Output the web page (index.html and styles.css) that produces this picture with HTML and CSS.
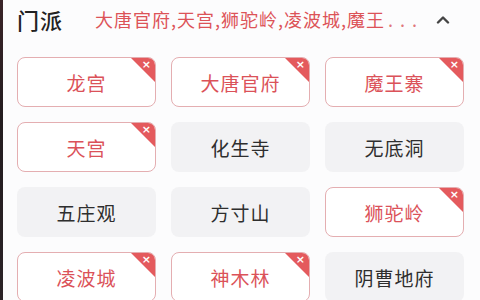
FILE: index.html
```html
<!DOCTYPE html>
<html lang="zh">
<head>
<meta charset="utf-8">
<link rel="stylesheet" href="styles.css">
</head>
<body>
<div class="screen">
  <div class="edge"></div>
  <div class="panel">
    <div class="header">
      <div class="title">门派</div>
      <div class="summary">大唐官府,天宫,狮驼岭,凌波城,魔王<span class="dots">...</span></div>
      <svg class="chevron" width="14" height="9" viewBox="0 0 14 9"><path d="M2 7.5 L7 2.5 L12 7.5" fill="none" stroke="#444" stroke-width="2.4" stroke-linecap="round" stroke-linejoin="round"/></svg>
    </div>
    <div class="grid">
      <div class="tag on">龙宫<span class="x">×</span></div>
      <div class="tag on">大唐官府<span class="x">×</span></div>
      <div class="tag on">魔王寨<span class="x">×</span></div>
      <div class="tag on">天宫<span class="x">×</span></div>
      <div class="tag">化生寺</div>
      <div class="tag">无底洞</div>
      <div class="tag">五庄观</div>
      <div class="tag">方寸山</div>
      <div class="tag on">狮驼岭<span class="x">×</span></div>
      <div class="tag on">凌波城<span class="x">×</span></div>
      <div class="tag on">神木林<span class="x">×</span></div>
      <div class="tag">阴曹地府</div>
    </div>
  </div>
</div>
</body>
</html>
```

FILE: styles.css
```css
html, body {
  margin: 0;
  padding: 0;
  width: 480px;
  height: 300px;
  overflow: hidden;
  background: #fcfcfd;
  font-family: "Noto Sans CJK SC", "Noto Sans", sans-serif;
}
.screen {
  display: flex;
  height: 300px;
}
.edge {
  width: 3px;
  flex: none;
  background: linear-gradient(#3a2428, #231c1f 40%, #2a2226);
}
.panel {
  flex: 1;
  padding: 0 16px 0 14px;
}
.header {
  display: flex;
  align-items: center;
  height: 38px;
}
.title {
  width: 78px;
  flex: none;
  font-size: 22px;
  font-weight: 500;
  color: #222;
  letter-spacing: 1px;
}
.summary {
  width: 330px;
  flex: none;
  font-size: 18px;
  color: #dc5358;
  letter-spacing: 1px;
  white-space: nowrap;
}
.dots {
  margin-left: 3px;
  letter-spacing: 7px;
  color: #e0777b;
}
.chevron {
  margin-left: 11px;
}
.grid {
  margin-top: 19px;
  display: grid;
  grid-template-columns: repeat(3, 139px);
  grid-auto-rows: 50px;
  gap: 15px;
}
.tag {
  position: relative;
  overflow: hidden;
  display: flex;
  align-items: center;
  justify-content: center;
  border-radius: 8px;
  background: #f2f2f4;
  color: #2e2e2e;
  font-size: 19px;
  letter-spacing: 1px;
  box-sizing: border-box;
}
.tag.on {
  background: #fff;
  border: 1px solid #e4aeb1;
  color: #db5259;
}
.tag.on::before {
  content: "";
  position: absolute;
  top: 0;
  right: 0;
  width: 24px;
  height: 24px;
  background: #e45a5d;
  clip-path: polygon(0 0, 100% 0, 100% 100%);
}
.x {
  position: absolute;
  top: 0;
  right: 4px;
  font-size: 11px;
  line-height: 13px;
  font-weight: 700;
  letter-spacing: 0;
  color: #fff;
  font-family: "DejaVu Sans", sans-serif;
}
```
